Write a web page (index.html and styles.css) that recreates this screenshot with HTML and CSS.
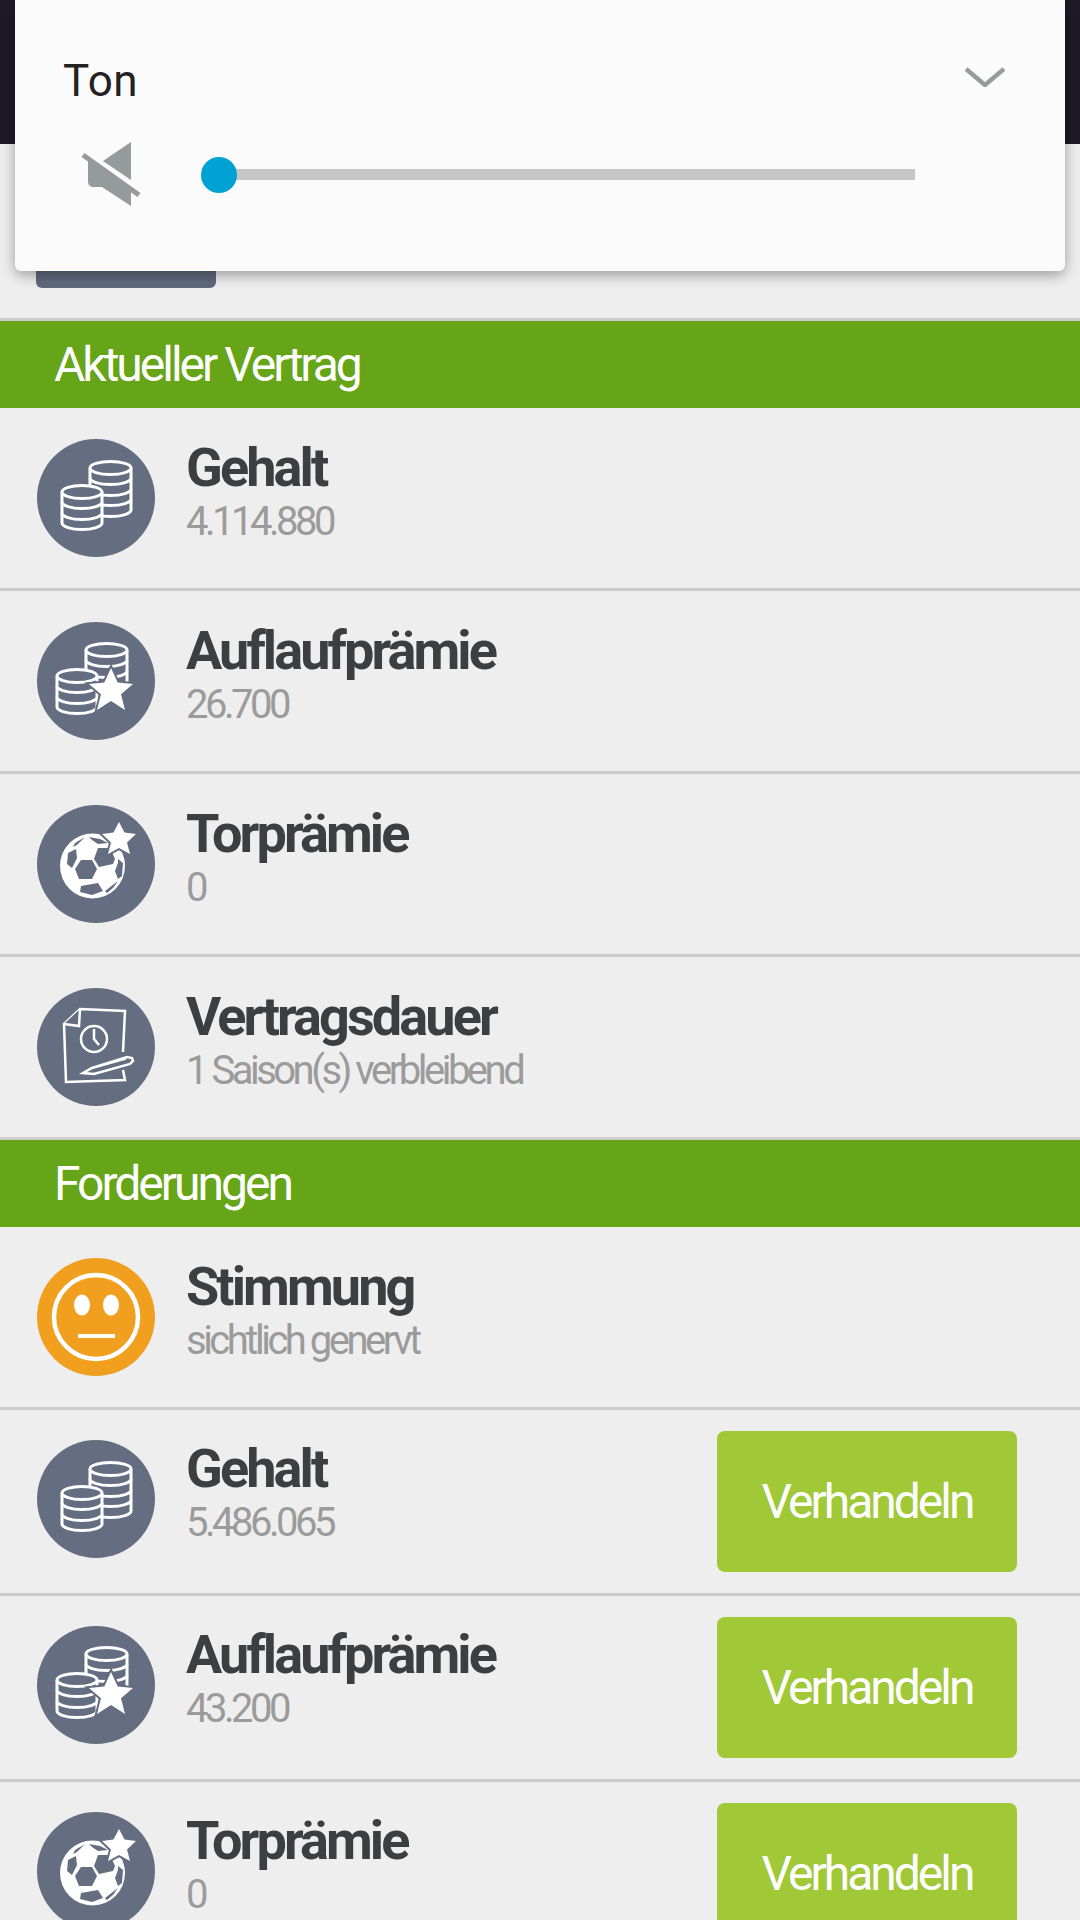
FILE: index.html
```html
<!DOCTYPE html>
<html lang="de">
<head>
  <meta charset="UTF-8" />
  <meta name="viewport" content="width=device-width, initial-scale=1.0"/>
  <title>Vertrag</title>
  <link rel="stylesheet" href="styles.css">
</head>
<body>

<!-- shared row icons, all on a 118 unit circle -->
<svg class="defs" width="0" height="0">
  <defs>
    <g id="stack-back">
      <path class="line" d="M53 29v42c0 3.5 9 6.5 20.500 6.500s20.500-3 20.500-6.500V29c0-3.500-9-6.500-20.500-6.500S53 25.500 53 29z"/>
      <path class="line" d="M53 29c0 3.500 9 6.500 20.500 6.500s20.500-3 20.500-6.500M53 39c0 3.500 9 6.500 20.500 6.500s20.500-3 20.500-6.500M53 50c0 3.500 9 6.500 20.500 6.500s20.500-3 20.500-6.500M53 60c0 3.500 9 6.500 20.500 6.500s20.500-3 20.500-6.500"/>
    </g>
    <g id="stack-front">
      <path class="line" d="M25 53v31c0 3.500 9 6.500 20 6.500s20-3 20-6.500V53c0-3.500-9-6.500-20-6.500S25 49.500 25 53z"/>
      <path class="line" d="M25 53c0 3.500 9 6.500 20 6.500s20-3 20-6.500M25 63c0 3.500 9 6.500 20 6.500s20-3 20-6.500M25 74c0 3.500 9 6.500 20 6.500s20-3 20-6.500"/>
    </g>
  </defs>
  <symbol id="coins" viewBox="0 0 118 118">
    <circle cx="59" cy="59" r="59" class="disc"/>
    <use href="#stack-back"/>
    <use href="#stack-front"/>
  </symbol>
  <symbol id="coins-star" viewBox="0 0 118 118">
    <circle cx="59" cy="59" r="59" class="disc"/>
    <path class="line" d="M49 28v36h41V28c0-3.500-9-6.500-20.500-6.500S49 24.500 49 28z"/>
    <path class="line" d="M49 28c0 3.500 9 6.500 20.500 6.500s20.500-3 20.500-6.500M49 38c0 3.500 9 6.500 20.500 6.500s20.500-3 20.500-6.500M49 49c0 3.500 9 6.500 20.500 6.500s20.500-3 20.500-6.500"/>
    <use href="#stack-front" x="-5" y="1"/>
    <path class="star" d="M74 46l6.700 14.500L96 62l-12 10.200L88 88l-14-9-14 9 4-15.800L52 62l15.300-1.500z"/>
  </symbol>
  <symbol id="ball-star" viewBox="0 0 118 118">
    <circle cx="59" cy="59" r="59" class="disc"/>
    <circle cx="55.500" cy="61" r="32.500" fill="#fff"/>
    <path class="patch" d="M38 64l6-9h11l5 9-5 10H42zM61 43h12l5 11-2 5-14 3-5-8zM38 38l10-6-8 8-4 2zM52 32l11 2 8 4-10 1-6-4zM31 48l8-4 1 9-5 10-5-4zM81 54l5 4-1 13-4 3-3-8 3-8zM44 81l17-3 5 8-11 4-12-3zM68 86l13-10-5 7-6 5z"/>
    <path class="star" d="M82 17l5.500 10.500 11.500 1.500-9 8.500L93 49l-11-6-11 6 3-11.500-9-8.500 11.500-1.500z"/>
  </symbol>
  <symbol id="contract" viewBox="0 0 118 118">
    <circle cx="59" cy="59" r="59" class="disc"/>
    <path class="pen" d="M86 64l2-41-45-2-16 15 2 58 59-2-2-10"/>
    <path class="pen" d="M43 21l-1 17-15-2"/>
    <circle class="pen" cx="57" cy="51" r="13"/>
    <path class="pen" d="M57 41v10l5 6"/>
    <path class="pen" d="M55 80l35-11 5 1 1 3-3 3-36 10-11-1z"/>
    <path class="pen thin" d="M60 79l29-8"/>
  </symbol>
  <symbol id="mood" viewBox="0 0 118 118">
    <circle cx="59" cy="59" r="59" fill="#f09f1f"/>
    <circle cx="59" cy="59" r="42" fill="none" stroke="#fff" stroke-width="4.500"/>
    <ellipse cx="45" cy="47" rx="8" ry="10.500" fill="#fff"/>
    <ellipse cx="74" cy="47" rx="8" ry="10.500" fill="#fff"/>
    <rect x="41" y="76" width="37" height="4" fill="#fff"/>
  </symbol>
</svg>

<header class="topbar"></header>

<div class="actions">
  <div class="action-btn"></div>
</div>

<!-- volume dialog on top of the page -->
<div class="volume">
  <div class="volume-head">
    <span class="volume-title">Ton</span>
    <svg class="chevron" width="40" height="20" viewBox="0 0 40 20">
      <path d="M1 2l19 16L39 2" fill="none" stroke="#979b9c" stroke-width="4.500"/>
    </svg>
  </div>
  <div class="volume-row">
    <svg class="mute" width="60" height="66" viewBox="0 0 60 66">
      <path d="M50 1v38L22 20z" fill="#959a9b"/>
      <path d="M7 18v22c0 4 2 6 6 6h8l29 19V50z" fill="#959a9b"/>
      <path d="M2 14l56 40" stroke="#959a9b" stroke-width="5"/>
    </svg>
    <div class="track"><div class="thumb"></div></div>
  </div>
</div>

<section>
  <h2 class="band">Aktueller Vertrag</h2>
  <div class="row">
    <svg class="ico"><use href="#coins"/></svg>
    <div class="info"><div class="name">Gehalt</div><div class="val">4.114.880</div></div>
  </div>
  <div class="row">
    <svg class="ico"><use href="#coins-star"/></svg>
    <div class="info"><div class="name">Auflaufprämie</div><div class="val">26.700</div></div>
  </div>
  <div class="row">
    <svg class="ico"><use href="#ball-star"/></svg>
    <div class="info"><div class="name">Torprämie</div><div class="val">0</div></div>
  </div>
  <div class="row">
    <svg class="ico"><use href="#contract"/></svg>
    <div class="info"><div class="name">Vertragsdauer</div><div class="val">1 Saison(s) verbleibend</div></div>
  </div>
</section>

<section>
  <h2 class="band">Forderungen</h2>
  <div class="row">
    <svg class="ico"><use href="#mood"/></svg>
    <div class="info"><div class="name">Stimmung</div><div class="val">sichtlich genervt</div></div>
  </div>
  <div class="row deal">
    <svg class="ico"><use href="#coins"/></svg>
    <div class="info"><div class="name">Gehalt</div><div class="val">5.486.065</div></div>
    <button class="btn">Verhandeln</button>
  </div>
  <div class="row deal">
    <svg class="ico"><use href="#coins-star"/></svg>
    <div class="info"><div class="name">Auflaufprämie</div><div class="val">43.200</div></div>
    <button class="btn">Verhandeln</button>
  </div>
  <div class="row deal">
    <svg class="ico"><use href="#ball-star"/></svg>
    <div class="info"><div class="name">Torprämie</div><div class="val">0</div></div>
    <button class="btn">Verhandeln</button>
  </div>
</section>

</body>
</html>
```

FILE: styles.css
```css
html, body { margin: 0; height: 1920px; overflow: hidden; }
body { font-family: Roboto, sans-serif; background: #eee; color: #3d3e40; position: relative; }
.defs { display: block; height: 0; }

.topbar { height: 144px; background: #1e1a28; }
.actions { padding: 72px 36px 30px; border-bottom: 3px solid #cbcbcb; }
.action-btn { width: 180px; height: 72px; background: #5f6a7d; border-radius: 6px; }

.volume {
  position: absolute;
  top: 0;
  left: 15px;
  width: 1050px;
  height: 271px;
  background: #fbfbfb;
  border-radius: 0 0 6px 6px;
  box-shadow: 0 4px 14px rgba(0, 0, 0, 0.35);
}
.volume-head { display: flex; justify-content: space-between; align-items: center; padding: 56px 60px 0 48px; height: 50px; }
.volume-title { font-size: 44px; letter-spacing: 0.5px; color: #222; }
.chevron { margin-top: -8px; }
.volume-row { display: flex; align-items: center; padding: 35px 0 0 66px; }
.mute { flex: none; }
.track { position: relative; width: 696px; height: 11px; margin-left: 78px; background: #c6c6c6; }
.thumb { position: absolute; left: -18px; top: -12px; width: 36px; height: 36px; border-radius: 50%; background: #00a2d3; }

.band {
  margin: 0;
  height: 87px;
  line-height: 87px;
  padding-left: 54px;
  background: #65a517;
  font-size: 48px;
  font-weight: 400;
  letter-spacing: -3px;
  color: #fff;
}

.row {
  display: flex;
  align-items: center;
  height: 180px;
  padding: 0 63px 0 37px;
  border-bottom: 3px solid #cbcbcb;
}
.row.deal { height: 183px; }
.ico { flex: none; width: 118px; height: 118px; }
.deal .ico, .deal .info { margin-bottom: 6px; }
.disc { fill: #646e80; }
.line { fill: #646e80; stroke: #fff; stroke-width: 3; }
.star { fill: #fff; stroke: #646e80; stroke-width: 4; paint-order: stroke; }
.patch { fill: #646e80; }
.pen { fill: #646e80; stroke: #fff; stroke-width: 2.500; }
.thin { stroke-width: 1.500; }

.info { flex: 1; margin-left: 31px; }
.name { font-size: 54px; font-weight: 700; line-height: 48px; letter-spacing: -2.900px; white-space: nowrap; }
.val { font-size: 40px; line-height: 60px; letter-spacing: -3.500px; color: #9b9b9b; }

.btn {
  flex: none;
  width: 300px;
  height: 141px;
  padding: 0;
  border: none;
  border-radius: 8px;
  background: #a0c837;
  color: #fff;
  font-family: Roboto, sans-serif;
  font-size: 48px;
  letter-spacing: -3px;
}
```
